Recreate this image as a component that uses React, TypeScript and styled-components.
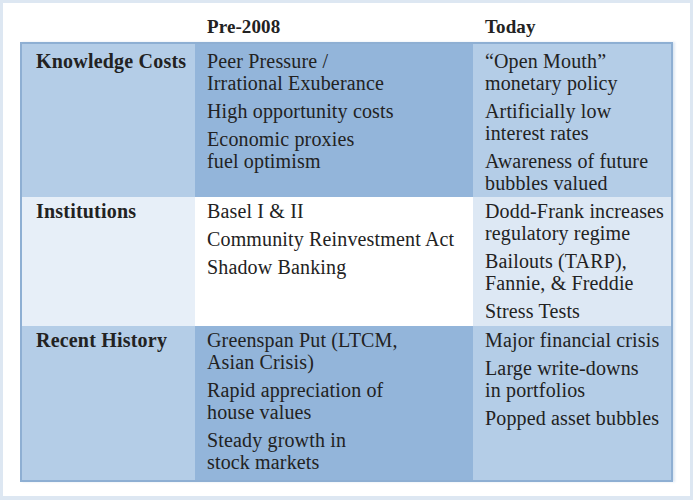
import React from "react";
import styled, { createGlobalStyle } from "styled-components";

const Global = createGlobalStyle`
  html, body { margin: 0; padding: 0; background: #ffffff; }
  * { box-sizing: border-box; }
`;

type Tone = "mid" | "dark" | "pale" | "white" | "paleAlt";

const toneColor: Record<Tone, string> = {
  mid: "#b4cde7",
  dark: "#93b5da",
  pale: "#e7eff8",
  white: "#ffffff",
  paleAlt: "#dde8f4",
};

const Page = styled.div`
  width: 693px;
  height: 500px;
  background: #ffffff;
  border: 3px solid #dde7f2;
  border-bottom-width: 4px;
  padding: 0 17px;
  font-family: "Liberation Serif", "Times New Roman", serif;
  color: #222222;
  display: flex;
  flex-direction: column;
`;

const HeaderRow = styled.div`
  display: grid;
  grid-template-columns: 175px 278px 200px;
  height: 39px;
  padding-top: 13px;
`;

const HeaderCell = styled.div<{ $pad: number }>`
  padding-left: ${(p) => p.$pad}px;
  font-size: 19px;
  line-height: 22px;
  font-weight: bold;
  letter-spacing: 0.1px;
`;

const Table = styled.div`
  display: grid;
  grid-template-columns: 173px 278px 198px;
  grid-template-rows: 153px 129px 154px;
  border: 2px solid #8eafd3;
  box-shadow: 2px 0 2px rgba(160, 190, 220, 0.35);
`;

const Cell = styled.div<{ $tone: Tone; $top: number; $left: number }>`
  background: ${(p) => toneColor[p.$tone]};
  padding: ${(p) => p.$top}px 0 0 ${(p) => p.$left}px;
  display: flex;
  flex-direction: column;
  gap: 6px;
  overflow: hidden;
`;

const Label = styled.div`
  font-size: 20px;
  line-height: 22px;
  font-weight: bold;
  letter-spacing: 0.2px;
  white-space: nowrap;
`;

const Item = styled.div`
  font-size: 20px;
  line-height: 22px;
  letter-spacing: 0.15px;
  white-space: pre;
`;

type Row = {
  label: string;
  tones: [Tone, Tone, Tone];
  top: number;
  pre: string[];
  today: string[];
};

const rows: Row[] = [
  {
    label: "Knowledge Costs",
    tones: ["mid", "dark", "mid"],
    top: 6,
    pre: [
      "Peer Pressure /\nIrrational Exuberance",
      "High opportunity costs",
      "Economic proxies\nfuel optimism",
    ],
    today: [
      "\u201COpen Mouth\u201D\nmonetary policy",
      "Artificially low\ninterest rates",
      "Awareness of future\nbubbles valued",
    ],
  },
  {
    label: "Institutions",
    tones: ["pale", "white", "paleAlt"],
    top: 3,
    pre: ["Basel I & II", "Community Reinvestment Act", "Shadow Banking"],
    today: [
      "Dodd-Frank increases\nregulatory regime",
      "Bailouts (TARP),\nFannie, & Freddie",
      "Stress Tests",
    ],
  },
  {
    label: "Recent History",
    tones: ["mid", "dark", "mid"],
    top: 3,
    pre: [
      "Greenspan Put (LTCM,\nAsian Crisis)",
      "Rapid appreciation of\nhouse values",
      "Steady growth in\nstock markets",
    ],
    today: [
      "Major financial crisis",
      "Large write-downs\nin portfolios",
      "Popped asset bubbles",
    ],
  },
];

export default function App() {
  return (
    <>
      <Global />
      <Page>
        <HeaderRow>
          <HeaderCell $pad={14} />
          <HeaderCell $pad={12}>Pre-2008</HeaderCell>
          <HeaderCell $pad={12}>Today</HeaderCell>
        </HeaderRow>
        <Table>
          {rows.map((r) => (
            <React.Fragment key={r.label}>
              <Cell $tone={r.tones[0]} $top={r.top} $left={14}>
                <Label>{r.label}</Label>
              </Cell>
              <Cell $tone={r.tones[1]} $top={r.top} $left={12}>
                {r.pre.map((t) => (
                  <Item key={t}>{t}</Item>
                ))}
              </Cell>
              <Cell $tone={r.tones[2]} $top={r.top} $left={12}>
                {r.today.map((t) => (
                  <Item key={t}>{t}</Item>
                ))}
              </Cell>
            </React.Fragment>
          ))}
        </Table>
      </Page>
    </>
  );
}
